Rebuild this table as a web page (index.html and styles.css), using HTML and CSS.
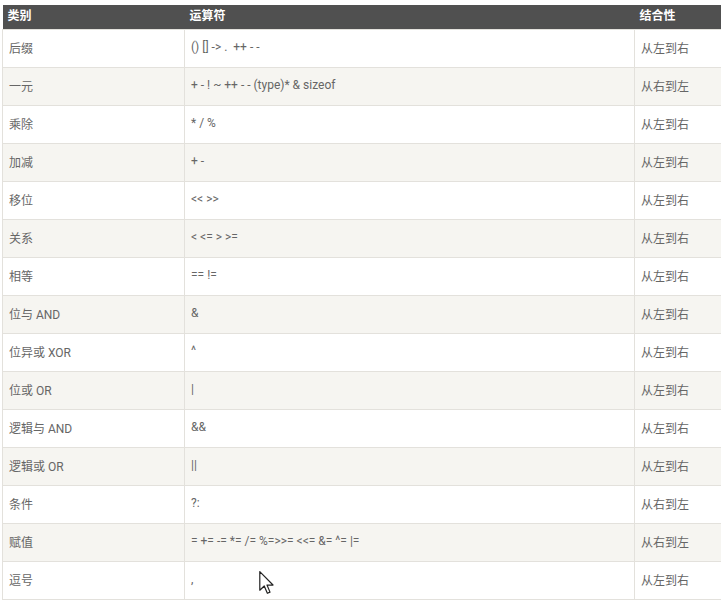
FILE: index.html
```html
<!DOCTYPE html>
<html lang="zh-CN">
<head>
<meta charset="utf-8">
<title>运算符优先级</title>
<link rel="stylesheet" href="styles.css">
</head>
<body>
<div class="page">
<table class="ops">
<colgroup><col class="c1"><col class="c2"><col class="c3"></colgroup>
<thead>
<tr><th>类别</th><th>运算符</th><th>结合性</th></tr>
</thead>
<tbody>
<tr><td>后缀</td><td>() [] -&gt; .  ++ - -</td><td>从左到右</td></tr>
<tr><td>一元</td><td>+ - ! ~ ++ - - (type)* &amp; sizeof</td><td>从右到左</td></tr>
<tr><td>乘除</td><td>* / %</td><td>从左到右</td></tr>
<tr><td>加减</td><td>+ -</td><td>从左到右</td></tr>
<tr><td>移位</td><td>&lt;&lt; &gt;&gt;</td><td>从左到右</td></tr>
<tr><td>关系</td><td>&lt; &lt;= &gt; &gt;=</td><td>从左到右</td></tr>
<tr><td>相等</td><td>== !=</td><td>从左到右</td></tr>
<tr><td>位与 AND</td><td>&amp;</td><td>从左到右</td></tr>
<tr><td>位异或 XOR</td><td>^</td><td>从左到右</td></tr>
<tr><td>位或 OR</td><td>|</td><td>从左到右</td></tr>
<tr><td>逻辑与 AND</td><td>&amp;&amp;</td><td>从左到右</td></tr>
<tr><td>逻辑或 OR</td><td>||</td><td>从左到右</td></tr>
<tr><td>条件</td><td>?:</td><td>从右到左</td></tr>
<tr><td>赋值</td><td>= += -= *= /= %=&gt;&gt;= &lt;&lt;= &amp;= ^= |=</td><td>从右到左</td></tr>
<tr><td>逗号</td><td>,</td><td>从左到右</td></tr>
</tbody>
</table>
<svg class="cursor" width="16" height="24" viewBox="0 0 13 20" aria-hidden="true">
<path d="M0.5 0.5 L0.5 16 L4.2 12.5 L6.8 18.6 L9 17.6 L6.5 11.7 L11.5 11.7 Z" fill="#fff" stroke="#222" stroke-width="1" stroke-linejoin="round"/>
</svg>
</div>
</body>
</html>
```
FILE: styles.css
```css
html, body {
  margin: 0;
  padding: 0;
  background: #fff;
  overflow: hidden;
}
.page {
  position: relative;
  padding: 5px 0 0 2px;
  width: 740px;
}
.ops {
  border-collapse: collapse;
  table-layout: fixed;
  width: 728px;
  font-family: Roboto, "Noto Sans CJK SC", sans-serif;
  font-size: 12px;
  color: #666;
}
.c1 { width: 182px; }
.c2 { width: 450px; }
.c3 { width: 96px; }
.ops th {
  background: #505050;
  color: #fff;
  font-weight: bold;
  text-align: left;
  height: 23px;
  padding: 0 5px 1px;
  line-height: 23px;
  border: none;
}
.ops td {
  height: 34px;
  padding: 0 6px 3px;
  border: 1px solid #e3e1dc;
  vertical-align: middle;
  white-space: pre;
}
.ops tbody tr:nth-child(even) td {
  background: #f6f5f1;
}
.cursor {
  position: absolute;
  left: 259px;
  top: 571px;
}
```
